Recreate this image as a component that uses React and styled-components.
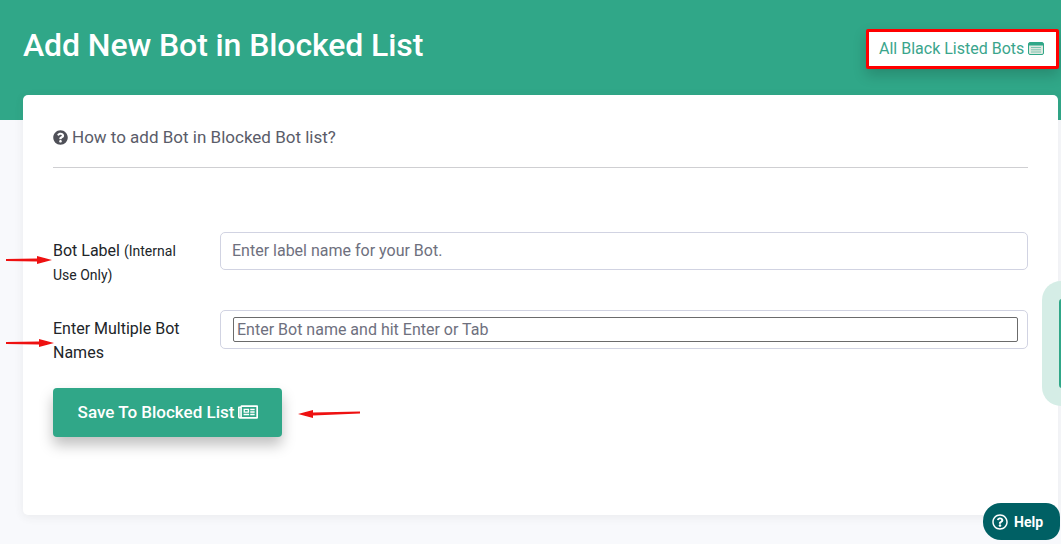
import React from "react";
import styled, { createGlobalStyle } from "styled-components";
import { FaQuestionCircle, FaRegNewspaper, FaRegQuestionCircle } from "react-icons/fa";

const Global = createGlobalStyle`
  html, body { margin: 0; padding: 0; height: 100%; overflow: hidden; }
  body { background: #f8f9fc; font-family: Roboto, "Liberation Sans", sans-serif; }
  input::placeholder { color: #6e707e; opacity: 1; }
`;
const Page = styled.div`position: relative; width: 1061px; height: 544px; overflow: hidden;`;
const Banner = styled.header`
  height: 120px; background: #30a788; padding: 0 2px 0 23px; box-sizing: border-box;
  display: flex; justify-content: space-between; align-items: flex-start;
`;
const Title = styled.h1`
  margin: 24px 0 0; font-size: 32px; line-height: 42px; font-weight: 500; color: #fff; letter-spacing: -0.1px;
`;
const ListLink = styled.a`
  margin-top: 29px; width: 193px; height: 40px; box-sizing: border-box; background: #fff;
  border: 3px solid #f00; border-radius: 2px; box-shadow: 0 6px 14px rgba(0,0,0,.18);
  display: flex; align-items: center; gap: 4px; padding: 0 0 2px 10px;
  color: #3aa58c; font-size: 16px; white-space: nowrap;
`;
const Card = styled.main`
  width: 1035px; height: 420px; margin: -25px 0 0 23px; box-sizing: border-box;
  background: #fff; border-radius: 5px; box-shadow: 0 2px 10px rgba(58,59,69,.08);
  padding: 0 30px;
`;
const HowTo = styled.div`
  height: 73px; border-bottom: 1px solid #cfcfd2; display: flex; align-items: flex-start; gap: 4px;
  padding-top: 32px; box-sizing: border-box; color: #5a5c69; font-size: 17px; line-height: 21px;
`;
const HowIcon = styled.span`display: flex; margin-top: 3px; font-size: 15px; color: #4f5058;`;
const Form = styled.form`padding-top: 64px; display: flex; flex-direction: column;`;
const Row = styled.div`
  display: grid; grid-template-columns: 167px 808px; align-items: start; margin-bottom: 23px;
`;
const Label = styled.label`
  font-size: 16px; line-height: 24px; color: #212529; padding: 7px 22px 0 0; display: block; box-sizing: border-box;
`;
const Small = styled.small`font-size: 14px; line-height: 24px;`;
const Field = styled.input`
  width: 100%; height: 38px; box-sizing: border-box; border: 1px solid #d1d3e2; border-radius: 5px;
  padding: 0 11px 2px; font: 400 16px Roboto, sans-serif; color: #6e707e; background: #fff; outline: none;
`;
const TagBox = styled.div`
  height: 39px; box-sizing: border-box; border: 1px solid #d1d3e2; border-radius: 5px;
  padding: 6px 9px 0 12px; background: #fff;
`;
const TagInput = styled.input`
  display: block; width: 100%; height: 25px; box-sizing: border-box; border: 1px solid #6b6b6b; border-radius: 2px;
  padding: 0 3px; font: 400 16px Roboto, sans-serif; background: #fff; outline: none;
`;
const SaveButton = styled.button`
  width: 229px; height: 49px; border: 0; border-radius: 4px; background: #30a788; color: #fff;
  font: 500 17px Roboto, sans-serif; display: flex; align-items: center; justify-content: center; gap: 4px;
  padding: 0 0 2px 1px; box-shadow: 0 8px 14px rgba(0,0,0,.25);
`;
const BtnIcon = styled(FaRegNewspaper)`font-size: 20px;`;
const Arrow = styled.svg`position: absolute; overflow: visible;`;
const SideTab = styled.div`
  position: absolute; left: 1042px; top: 281px; width: 19px; height: 125px; background: #d5ede6;
  border-radius: 20px 0 0 20px;
`;
const SideInner = styled.div`
  position: absolute; left: 17px; top: 18px; width: 4px; height: 89px; background: #30a788; border-radius: 3px 0 0 3px;
`;
const Help = styled.div`
  position: absolute; left: 983px; top: 503px; width: 77px; height: 37px; border-radius: 18px 14px 14px 18px;
  background: #006064; color: #fff; display: flex; align-items: center; gap: 6px; padding-left: 9px;
  box-sizing: border-box; font: 700 14px Roboto, sans-serif;
`;

const TableIcon = () => (
  <svg width="16" height="13" viewBox="0 0 16 13" fill="none">
    <rect x=".5" y=".5" width="15" height="12" rx="1.5" fill="#dfe8e0" stroke="#30a788" />
    <rect x="1" y="1" width="14" height="2.5" fill="#30a788" />
    <path d="M3 5.5h10M3 7.8h10M3 10h10" stroke="#7cc4b0" />
  </svg>
);
const RedArrow = ({ x, y, w, flip, tilt = 0 }) => (
  <Arrow style={{ left: x, top: y }} width={w} height="10" viewBox={`0 0 ${w} 10`}>
    <g transform={flip ? `rotate(180 ${w / 2} 5)` : undefined}>
      <path d={`M0 ${4 - tilt} L${w - 15} ${3.6} L${w - 15} 1 L${w} 5 L${w - 15} 9 L${w - 15} 6.4 L0 ${6 - tilt} Z`} fill="#ee1111" />
    </g>
  </Arrow>
);

export default function App() {
  return (
    <Page>
      <Global />
      <Banner>
        <Title>Add New Bot in Blocked List</Title>
        <ListLink>All Black Listed Bots <TableIcon /></ListLink>
      </Banner>
      <Card>
        <HowTo><HowIcon><FaQuestionCircle /></HowIcon>How to add Bot in Blocked Bot list?</HowTo>
        <Form>
          <Row>
            <Label>Bot Label <Small>(Internal Use Only)</Small></Label>
            <Field placeholder="Enter label name for your Bot." />
          </Row>
          <Row>
            <Label>Enter Multiple Bot Names</Label>
            <TagBox><TagInput placeholder="Enter Bot name and hit Enter or Tab" /></TagBox>
          </Row>
          <SaveButton type="button">Save To Blocked List <BtnIcon /></SaveButton>
        </Form>
      </Card>
      <RedArrow x={6} y={255} w={46} />
      <RedArrow x={6} y={338} w={48} />
      <RedArrow x={298} y={409} w={62} flip tilt={-1.5} />
      <SideTab><SideInner /></SideTab>
      <Help><FaRegQuestionCircle size={16} />Help</Help>
    </Page>
  );
}
